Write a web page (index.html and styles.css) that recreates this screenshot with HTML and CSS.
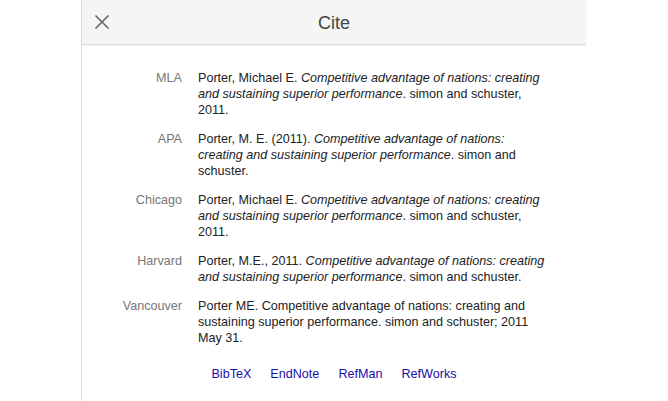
FILE: index.html
```html
<!DOCTYPE html>
<html>
<head>
<meta charset="utf-8">
<link rel="stylesheet" href="styles.css">
</head>
<body>
<div class="dialog">
  <div class="header">
    <button class="close" aria-label="Close">
      <svg width="16" height="16" viewBox="0 0 16 16"><path d="M1.5 1.5L14.5 14.5M14.5 1.5L1.5 14.5" stroke="#666" stroke-width="1.6" fill="none"/></svg>
    </button>
    <div class="title">Cite</div>
  </div>
  <div class="content">
    <div class="cites">
      <div class="label">MLA</div>
      <div class="cite">Porter, Michael E. <i>Competitive advantage of nations: creating and sustaining superior performance</i>. simon and schuster, 2011.</div>
      <div class="label">APA</div>
      <div class="cite">Porter, M. E. (2011). <i>Competitive advantage of nations: creating and sustaining superior performance</i>. simon and schuster.</div>
      <div class="label">Chicago</div>
      <div class="cite">Porter, Michael E. <i>Competitive advantage of nations: creating and sustaining superior performance</i>. simon and schuster, 2011.</div>
      <div class="label">Harvard</div>
      <div class="cite">Porter, M.E., 2011. <i>Competitive advantage of nations: creating and sustaining superior performance</i>. simon and schuster.</div>
      <div class="label">Vancouver</div>
      <div class="cite">Porter ME. Competitive advantage of nations: creating and sustaining superior performance. simon and schuster; 2011 May 31.</div>
    </div>
    <div class="links">
      <a href="#">BibTeX</a>
      <a href="#">EndNote</a>
      <a href="#">RefMan</a>
      <a href="#">RefWorks</a>
    </div>
  </div>
</div>
</body>
</html>
```
FILE: styles.css
```css
html, body {
  margin: 0;
  padding: 0;
  background: #fff;
  font-family: "Liberation Sans", Arial, sans-serif;
}
.dialog {
  margin-left: 81px;
  width: 504px;
  height: 401px;
  border-left: 1px solid #dcdcdc;
  background: #fff;
}
.header {
  position: relative;
  height: 44px;
  background: #f5f5f5;
  border-bottom: 1px solid #dedede;
  box-shadow: 0 1px 1px rgba(0,0,0,0.05);
  display: flex;
  align-items: center;
  justify-content: center;
}
.close {
  position: absolute;
  left: 12px;
  top: 14px;
  width: 16px;
  height: 16px;
  padding: 0;
  border: 0;
  background: none;
  display: block;
}
.close svg { display: block; }
.title {
  font-size: 18px;
  color: #444;
  padding-top: 2px;
}
.content {
  padding-top: 25px;
}
.cites {
  display: grid;
  grid-template-columns: 100px 350px;
  column-gap: 16px;
  row-gap: 13px;
  font-size: 12.6px;
  line-height: 16px;
}
.label {
  text-align: right;
  color: #777;
}
.cite {
  color: #222;
}
.links {
  display: flex;
  justify-content: center;
  gap: 19px;
  margin-top: 20px;
  font-size: 12.6px;
  line-height: 16px;
}
.links a {
  color: #1a0dab;
  text-decoration: none;
}
```
